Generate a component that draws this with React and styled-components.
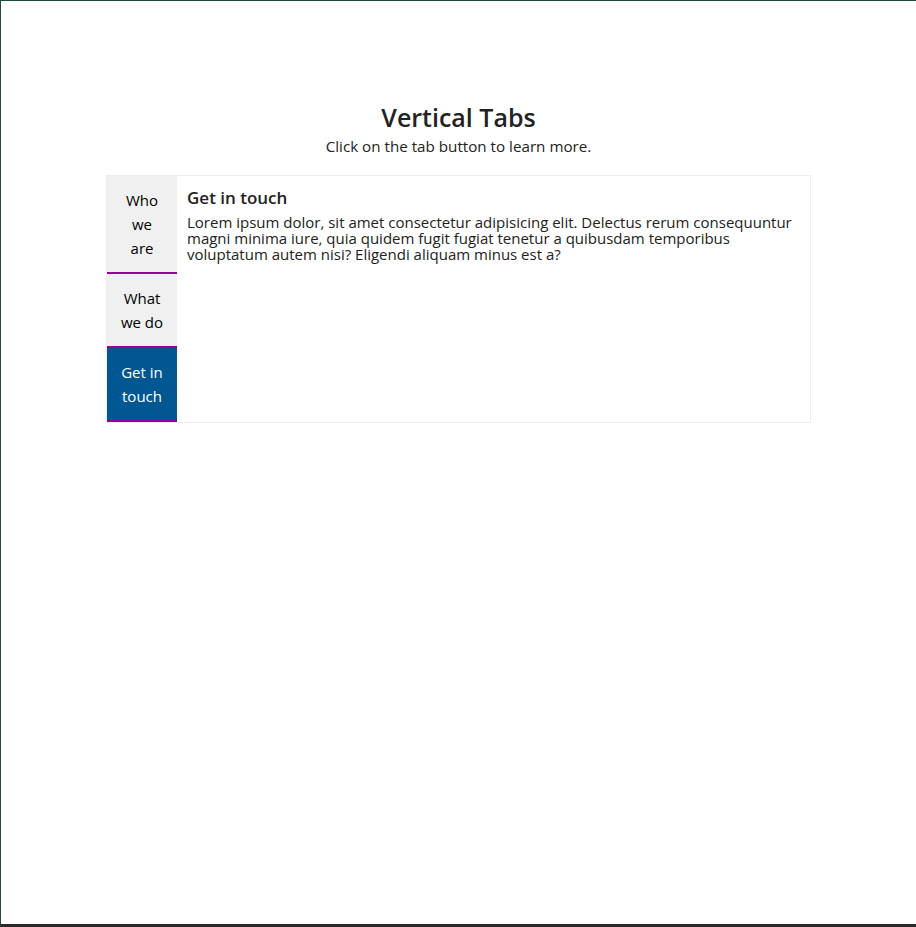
import React, { useState } from 'react'
import styled, { createGlobalStyle } from 'styled-components'

const tabs = [
  {
    id: 'who',
    label: 'Who we are',
    title: 'Who we are',
    text: 'Lorem ipsum dolor sit amet consectetur adipisicing elit. Quos, quia voluptates, temporibus reprehenderit sapiente eveniet natus nisi minima.',
  },
  {
    id: 'what',
    label: 'What we do',
    title: 'What we do',
    text: 'Lorem ipsum dolor sit amet, consectetur adipisicing elit. Nesciunt officiis iure numquam sequi dicta, magnam esse quia aliquid.',
  },
  {
    id: 'touch',
    label: 'Get in touch',
    title: 'Get in touch',
    text: 'Lorem ipsum dolor, sit amet consectetur adipisicing elit. Delectus rerum consequuntur magni minima iure, quia quidem fugit fugiat tenetur a quibusdam temporibus voluptatum autem nisi? Eligendi aliquam minus est a?',
  },
]

function App() {
  const [active, setActive] = useState('touch')
  const current = tabs.find((t) => t.id === active)

  return (
    <>
      <GlobalStyle />
      <Frame>
        <Header>
          <Title>Vertical Tabs</Title>
          <Subtitle>Click on the tab button to learn more.</Subtitle>
        </Header>
        <TabBox>
          <TabList>
            {tabs.map((t) => (
              <TabButton
                key={t.id}
                $active={t.id === active}
                onClick={() => setActive(t.id)}
              >
                {t.label}
              </TabButton>
            ))}
          </TabList>
          <TabPanel>
            <PanelTitle>{current.title}</PanelTitle>
            <PanelText>{current.text}</PanelText>
          </TabPanel>
        </TabBox>
      </Frame>
    </>
  )
}

const GlobalStyle = createGlobalStyle`
    html, body {
        margin: 0;
        padding: 0;
        background: #fff;
    }
    body {
        font-family: "Open Sans", "Noto Sans", sans-serif;
        color: #222;
    }
`;
const Frame = styled.div`
    min-height: 100vh;
    box-sizing: border-box;
    border-top: 1px solid #1f4b45;
    border-left: 1px solid #1f4b45;
    border-bottom: 3px solid #2a2a2a;
    padding-top: 100px;
`;
const Header = styled.header`
    text-align: center;
`;
const Title = styled.h2`
    margin: 0;
    font-size: 25px;
    font-weight: 600;
    line-height: 32px;
    color: #222;
`;
const Subtitle = styled.p`
    margin: 0;
    font-size: 15.2px;
    line-height: 26px;
    color: #222;
`;
const TabBox = styled.div`
    display: flex;
    width: 703px;
    margin: 16px auto 0;
    border: 1px solid #eeeeee;
`;
const TabList = styled.div`
    display: flex;
    flex-direction: column;
    width: 70px;
    flex-shrink: 0;
    background: #f1f1f1;
`;
const TabButton = styled.button`
    display: block;
    width: 100%;
    padding: 12px 12px;
    border: none;
    border-bottom: 2px solid #990099;
    outline: none;
    background: ${(p) => (p.$active ? '#005792' : '#f0f0f0')};
    color: ${(p) => (p.$active ? '#fff' : '#000')};
    font-family: inherit;
    font-size: 15px;
    line-height: 24px;
    text-align: center;
    cursor: pointer;
`;
const TabPanel = styled.div`
    flex: 1;
    padding: 10px 10px;
`;
const PanelTitle = styled.h3`
    margin: 0 0 4px;
    font-size: 17px;
    font-weight: 600;
    line-height: 24px;
`;
const PanelText = styled.p`
    margin: 0;
    font-size: 15px;
    line-height: 16px;
`;

export default App
